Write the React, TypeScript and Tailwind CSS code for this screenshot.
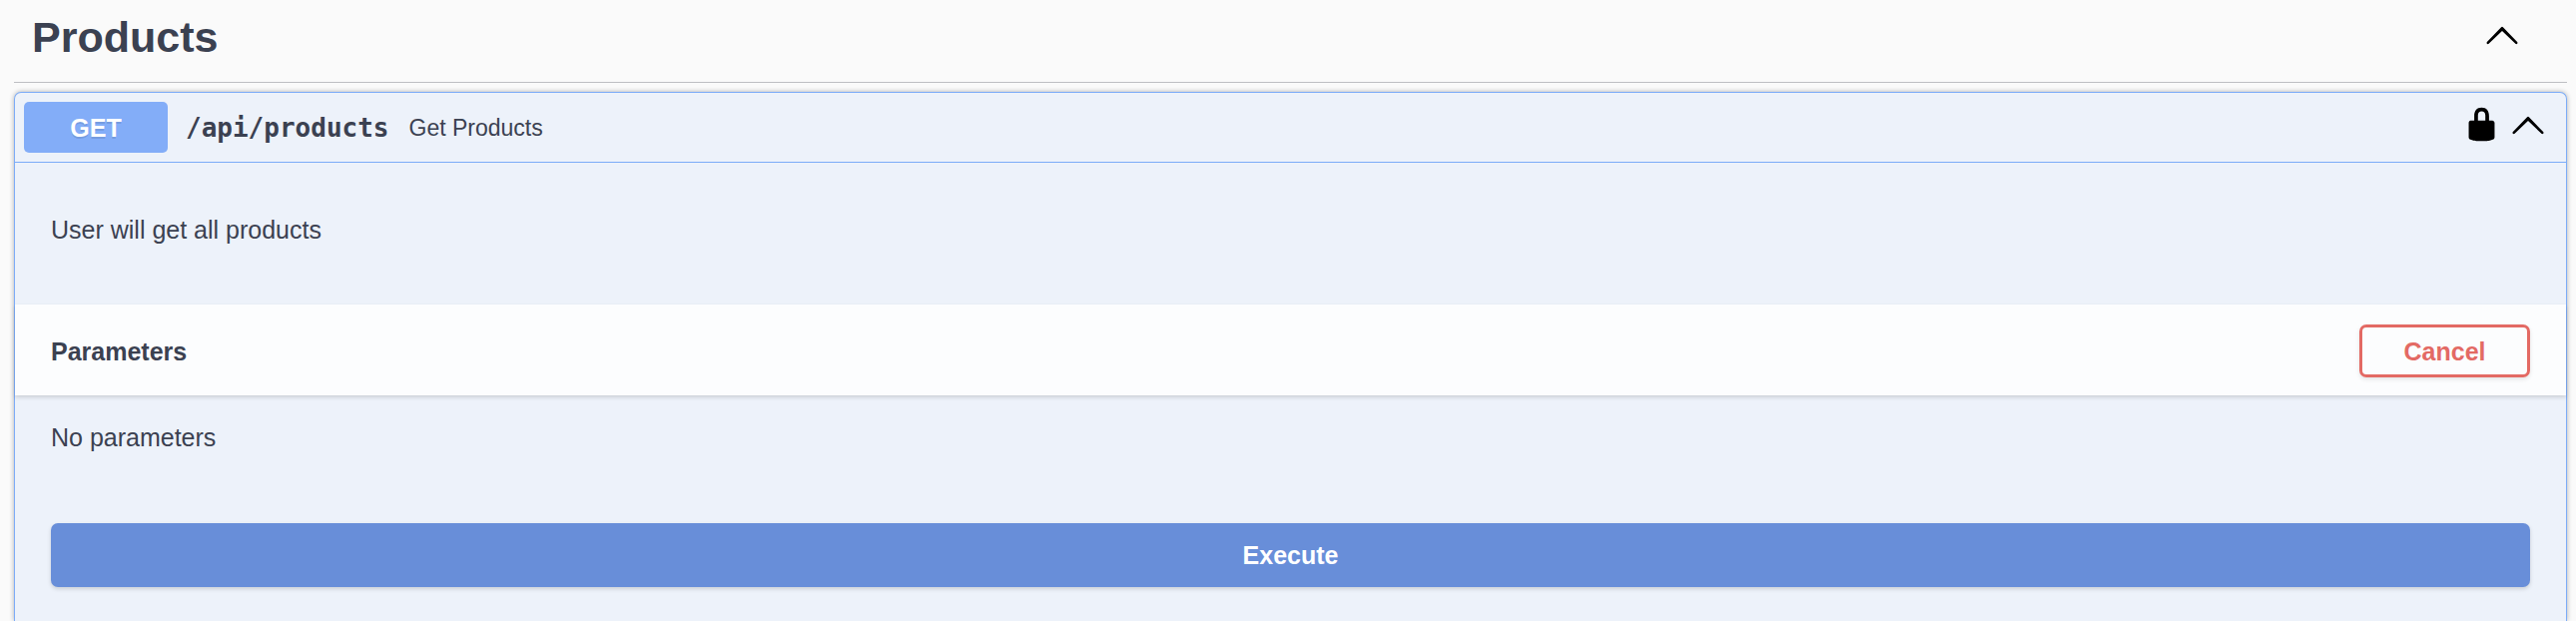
import React from "react";

function ArrowUp() {
  return (
    <svg viewBox="0 0 20 20" className="size-9 fill-black" aria-hidden="true">
      <path d="M17.418 14.908c.272.281.715.281.984 0a.726.726 0 000-1.011l-7.91-8.19a.683.683 0 00-.984 0l-7.91 8.19a.724.724 0 000 1.011c.272.281.715.281.985 0L10 7.767l7.418 7.141z" />
    </svg>
  );
}

function Lock() {
  return (
    <svg viewBox="0 0 20 20" className="size-[37px] fill-black" aria-hidden="true">
      <path d="M15.8 8H14V5.6C14 2.703 12.665 1 10 1 7.334 1 6 2.703 6 5.6V8H4c-.553 0-1 .646-1 1.199V17c0 .549.428 1.139.951 1.307l1.197.387C5.672 18.861 6.55 19 7.1 19h5.8c.549 0 1.428-.139 1.951-.307l1.196-.387c.524-.167.953-.757.953-1.306V9.199C17 8.646 16.352 8 15.8 8zM12 8H8V5.199C8 3.754 8.797 3 10 3c1.203 0 2 .754 2 2.199V8z" />
    </svg>
  );
}

export default function App() {
  return (
    <main className="flex min-h-screen flex-col bg-[#fafafa] pl-3.5 pr-[9px] font-['Liberation_Sans',Arial,sans-serif] text-[25px] leading-8 text-[#3b4151]">
      <header className="mb-[9px] flex items-center justify-between border-b border-[#bdbfc3] pb-[9px] pl-[18px] pr-[47px]">
        <h1 className="flex h-[73px] items-center text-[43px] font-bold">Products</h1>
        <button type="button" aria-label="Collapse Products" className="mb-1">
          <ArrowUp />
        </button>
      </header>
      <section className="grow rounded-t-[7px] border border-b-0 border-[#7cacf8] bg-[#edf2fa] shadow-[0_0_5px_rgba(0,0,0,0.3)]">
        <div className="flex items-center border-b border-[#7cacf8] py-[9px] pl-[9px] pr-5">
          <span className="flex h-[51px] w-36 items-center justify-center rounded-[5px] bg-[#83adf8] font-bold text-white [text-shadow:0_2px_0_rgba(0,0,0,0.1)]">
            GET
          </span>
          <code className="ml-[18px] font-['DejaVu_Sans_Mono',monospace] text-[26px] font-bold">/api/products</code>
          <p className="ml-5 grow text-[23px]">Get Products</p>
          <button type="button" aria-label="Authorization" className="mb-1.5 mr-2.5">
            <Lock />
          </button>
          <button type="button" aria-label="Collapse operation" className="mb-1.5">
            <ArrowUp />
          </button>
        </div>
        <p className="px-9 pb-[59px] pt-[51px]">User will get all products</p>
        <div className="flex items-center justify-between bg-[#fcfdfe] px-9 pb-[18px] pt-5 shadow-[0_2px_4px_rgba(0,0,0,0.15)]">
          <h2 className="font-bold">Parameters</h2>
          <button
            type="button"
            className="h-[53px] w-[171px] rounded-[7px] border-3 border-[#e36a64] font-bold text-[#e36a64] shadow-[0_2px_4px_rgba(0,0,0,0.1)]"
          >
            Cancel
          </button>
        </div>
        <p className="px-9 pt-[26px]">No parameters</p>
        <div className="px-9 pt-[70px]">
          <button
            type="button"
            className="h-16 w-full rounded-[7px] bg-[#688ed9] font-bold text-white shadow-[0_2px_4px_rgba(0,0,0,0.15)]"
          >
            Execute
          </button>
        </div>
      </section>
    </main>
  );
}
